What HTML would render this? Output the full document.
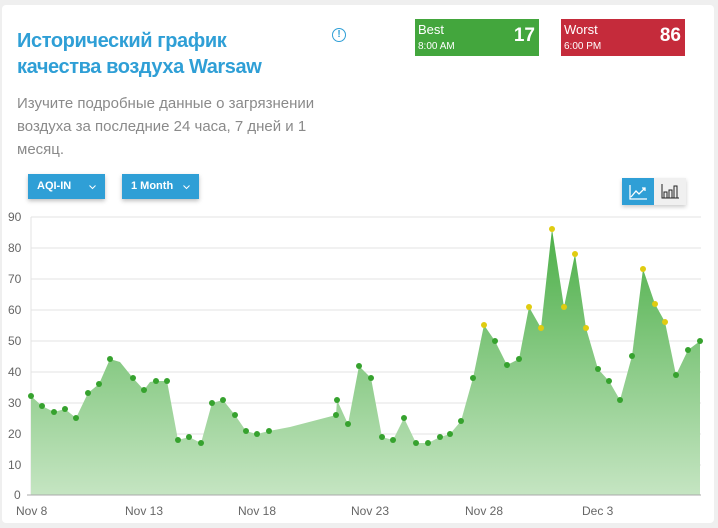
<!DOCTYPE html>
<html><head><meta charset="utf-8"><style>
body{margin:0;width:718px;height:528px;background:#efefef;font-family:"Liberation Sans",sans-serif;overflow:hidden;position:relative}
.card{position:absolute;left:2px;top:5px;width:712px;height:518px;background:#fff;border-radius:4px}
.t{position:absolute;left:17px;top:28px;font-size:20px;line-height:26px;color:#2f9fd6;font-weight:bold;letter-spacing:-0.4px}
.d{position:absolute;left:17px;top:92px;font-size:15px;line-height:23px;color:#8a8a8a;width:330px}
.info{position:absolute;left:332px;top:28px;width:12px;height:12px;border:1.5px solid #2f9fd6;border-radius:50%;color:#2f9fd6;font-size:10px;font-weight:bold;text-align:center;line-height:12px}
.badge{position:absolute;top:19px;height:37px;color:#fff}
.badge .l{position:absolute;left:3px;top:3px;font-size:13px}
.badge .s{position:absolute;left:3px;top:22px;font-size:10px}
.badge .n{position:absolute;right:4px;top:6px;font-size:19px;font-weight:bold}
.btn{position:absolute;top:174px;height:25px;background:#2f9fd6;color:#fff;font-size:11px;font-weight:bold;line-height:25px;box-shadow:0 2px 4px rgba(0,0,0,.25)}
.btn svg{position:absolute;right:9px;top:11px}
</style></head><body>
<div class="card"></div>
<div class="t">Исторический график<br>качества воздуха Warsaw</div>
<div class="info">!</div>
<div class="d">Изучите подробные данные о загрязнении воздуха за последние 24 часа, 7 дней и 1 месяц.</div>
<div class="badge" style="left:415px;width:124px;background:#43a63d"><span class="l">Best</span><span class="s">8:00 AM</span><span class="n">17</span></div>
<div class="badge" style="left:561px;width:124px;background:#c52b3b"><span class="l">Worst</span><span class="s">6:00 PM</span><span class="n">86</span></div>
<div class="btn" style="left:28px;width:77px"><span style="margin-left:9px">AQI-IN</span><svg width="7" height="5"><path d="M0.5 0.5L3.5 3.5 6.5 0.5" stroke="#fff" fill="none"/></svg></div>
<div class="btn" style="left:122px;width:77px"><span style="margin-left:9px">1 Month</span><svg width="7" height="5"><path d="M0.5 0.5L3.5 3.5 6.5 0.5" stroke="#fff" fill="none"/></svg></div>
<div style="position:absolute;left:622px;top:178px;width:64px;height:27px;background:#f0f0f0;box-shadow:0 2px 4px rgba(0,0,0,.2)">
<div style="position:absolute;left:0;top:0;width:32px;height:27px;background:#2f9fd6"></div>
<svg width="64" height="27" style="position:absolute;left:0;top:0"><path d="M8 7V21H25M9 19L14 13 17 16 23 10M20 10H23V13" stroke="#fff" stroke-width="1.3" fill="none"/><path d="M40 6V20H57M42 20V14H45V20M47 20V12H50V20M52 20V8H55V20" stroke="#222" stroke-width="1" fill="none"/></svg></div>
<svg width="718" height="528" style="position:absolute;left:0;top:0">
<defs><linearGradient id="g" x1="0" y1="0" x2="0" y2="1"><stop offset="0" stop-color="#4caf48"/><stop offset="1" stop-color="#c5e5c2"/></linearGradient></defs>
<g stroke="#e3e3e3" stroke-width="1">
<line x1="31" x2="701" y1="217" y2="217"/><line x1="31" x2="701" y1="248" y2="248"/><line x1="31" x2="701" y1="279" y2="279"/><line x1="31" x2="701" y1="310" y2="310"/><line x1="31" x2="701" y1="341" y2="341"/><line x1="31" x2="701" y1="372" y2="372"/><line x1="31" x2="701" y1="403" y2="403"/><line x1="31" x2="701" y1="434" y2="434"/><line x1="31" x2="701" y1="465" y2="465"/><line x1="31" x2="31" y1="217" y2="495"/>
</g>
<polygon fill="url(#g)" points="31,495 31,396 42,406 54,412 65,409 76,418 88,393 99,384 110,359 120,362 133,378 144,390 150,382 156,381 167,381 178,440 189,437 201,443 212,403 223,400 235,415 246,431 257,434 269,431 290,427 336,415 337,400 348,424 359,366 371,378 382,437 393,440 404,418 416,443 428,443 440,437 450,434 461,421 473,378 484,325 495,341 507,365 519,359 529,307 541,328 552,229 564,307 575,254 586,328 598,369 609,381 620,400 632,356 643,269 655,304 665,322 676,375 688,350 700,341 700,495"/>
<line x1="27" x2="701" y1="495" y2="495" stroke="#aaa"/>
<g fill="#36a22e">
<circle cx="31" cy="396" r="3"/><circle cx="42" cy="406" r="3"/><circle cx="54" cy="412" r="3"/><circle cx="65" cy="409" r="3"/><circle cx="76" cy="418" r="3"/><circle cx="88" cy="393" r="3"/><circle cx="99" cy="384" r="3"/><circle cx="110" cy="359" r="3"/><circle cx="133" cy="378" r="3"/><circle cx="144" cy="390" r="3"/><circle cx="156" cy="381" r="3"/><circle cx="167" cy="381" r="3"/><circle cx="178" cy="440" r="3"/><circle cx="189" cy="437" r="3"/><circle cx="201" cy="443" r="3"/><circle cx="212" cy="403" r="3"/><circle cx="223" cy="400" r="3"/><circle cx="235" cy="415" r="3"/><circle cx="246" cy="431" r="3"/><circle cx="257" cy="434" r="3"/><circle cx="269" cy="431" r="3"/><circle cx="336" cy="415" r="3"/><circle cx="337" cy="400" r="3"/><circle cx="348" cy="424" r="3"/><circle cx="359" cy="366" r="3"/><circle cx="371" cy="378" r="3"/><circle cx="382" cy="437" r="3"/><circle cx="393" cy="440" r="3"/><circle cx="404" cy="418" r="3"/><circle cx="416" cy="443" r="3"/><circle cx="428" cy="443" r="3"/><circle cx="440" cy="437" r="3"/><circle cx="450" cy="434" r="3"/><circle cx="461" cy="421" r="3"/><circle cx="473" cy="378" r="3"/><circle cx="495" cy="341" r="3"/><circle cx="507" cy="365" r="3"/><circle cx="519" cy="359" r="3"/><circle cx="598" cy="369" r="3"/><circle cx="609" cy="381" r="3"/><circle cx="620" cy="400" r="3"/><circle cx="632" cy="356" r="3"/><circle cx="676" cy="375" r="3"/><circle cx="688" cy="350" r="3"/><circle cx="700" cy="341" r="3"/>
</g>
<g fill="#e0cc10">
<circle cx="484" cy="325" r="3"/><circle cx="529" cy="307" r="3"/><circle cx="541" cy="328" r="3"/><circle cx="552" cy="229" r="3"/><circle cx="564" cy="307" r="3"/><circle cx="575" cy="254" r="3"/><circle cx="586" cy="328" r="3"/><circle cx="643" cy="269" r="3"/><circle cx="655" cy="304" r="3"/><circle cx="665" cy="322" r="3"/>
</g>
<g font-family="Liberation Sans" font-size="12" fill="#666">
<text x="8" y="221">90</text><text x="8" y="252">80</text><text x="8" y="283">70</text><text x="8" y="314">60</text><text x="8" y="345">50</text><text x="8" y="376">40</text><text x="8" y="407">30</text><text x="8" y="438">20</text><text x="8" y="469">10</text><text x="14" y="499">0</text>
<text x="16" y="515">Nov 8</text><text x="125" y="515">Nov 13</text><text x="238" y="515">Nov 18</text><text x="351" y="515">Nov 23</text><text x="465" y="515">Nov 28</text><text x="582" y="515">Dec 3</text>
</g>
</svg>
</body></html>
